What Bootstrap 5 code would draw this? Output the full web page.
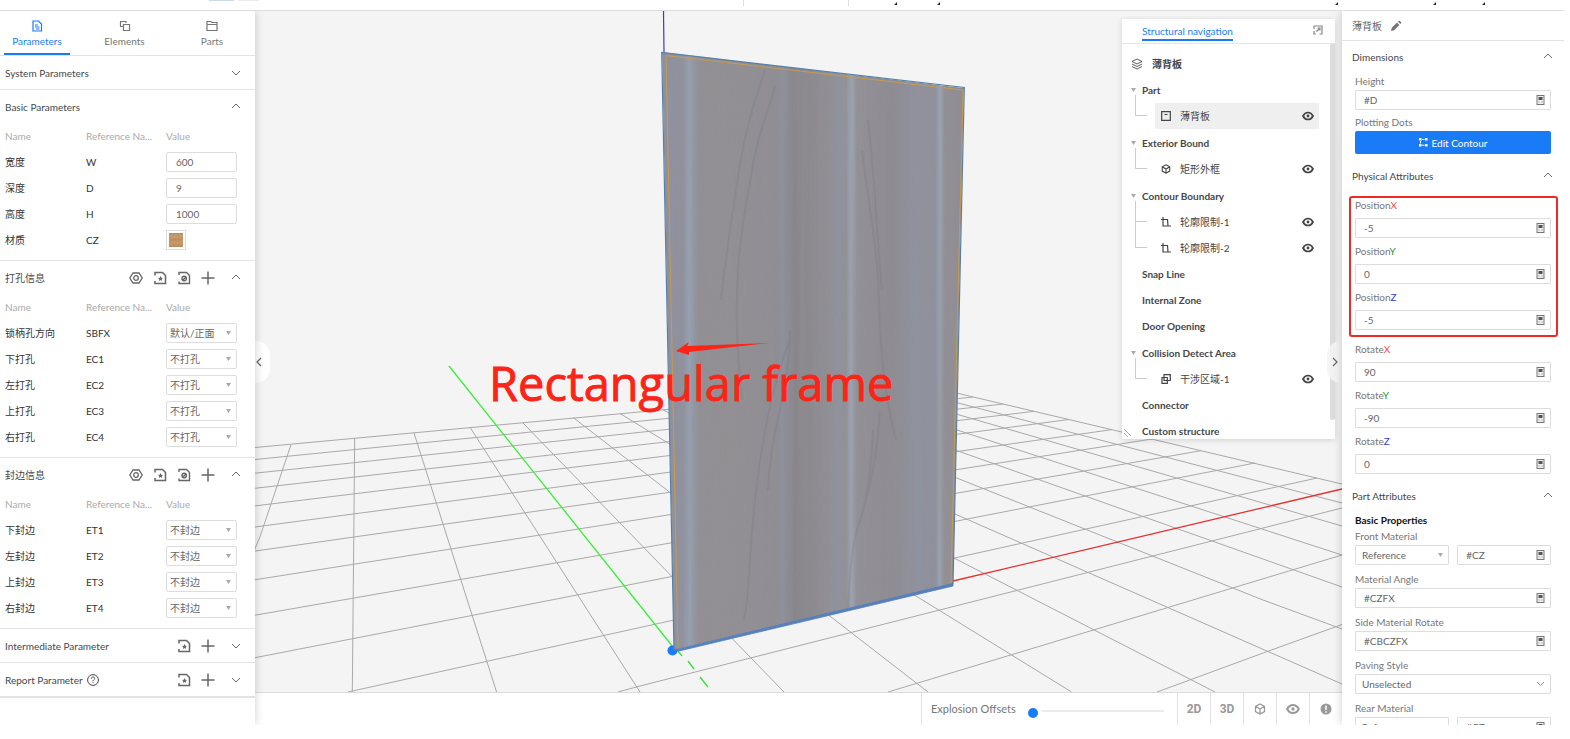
<!DOCTYPE html>
<html lang="en">
<head>
<meta charset="utf-8">
<meta name="viewport" content="width=device-width, initial-scale=1">
<title>Part editor</title>
<link rel="stylesheet" href="https://cdn.jsdelivr.net/npm/bootstrap@5.3.0/dist/css/bootstrap.min.css">
<style>
:root{--blue:#1a7bf7;--line:#e3e3e3;--ink:#45474b;--soft:#777;--faint:#aaa}
body{font-family:Lato,"Noto Sans CJK SC",sans-serif;font-size:10px;line-height:14px;color:var(--ink);background:#fff;height:100vh;padding:0 6px 14px 0;overflow:hidden}
svg{display:block;flex:none}
.line-icon{fill:none;stroke:currentColor;stroke-width:1.2}
.top-strip{height:11px;border-bottom:1px solid #dcdcdc}
.side-left{width:255px;box-shadow:1px 0 8px rgba(0,0,0,.16);z-index:3}
.side-right{width:222px;box-shadow:-1px 0 8px rgba(0,0,0,.16);z-index:4;overflow:hidden}
.icon-btn{border:0;background:none;padding:0;color:#666;display:block}
.tab-row{height:45px;border-bottom:1px solid var(--line);padding-left:4px;padding-right:10px}
.tab-row .nav-link{width:66px;height:44px;padding:9px 0 0;color:#777;border-bottom:2px solid transparent;line-height:14px}
.tab-row .nav-link.active{color:var(--blue);border-color:var(--blue)}
.tab-row .nav-link svg{margin:0 auto 2px}
.section{border-bottom:1px solid var(--line)}
.section.last{border-width:2px}
.section-head{height:33px;padding:0 14px 0 5px}
.section-head h2,.prop-head h2{font-size:10px;line-height:14px;font-weight:400;margin:0}
.tools{gap:8px;margin-right:15px}
.param-table{width:100%;table-layout:fixed;margin-bottom:7px;border-collapse:collapse}
.param-table td,.param-table th{height:26px;padding:0 0 0 5px;font-weight:400;vertical-align:middle;white-space:nowrap}
.param-table th{color:var(--faint)}
.param-table td{color:#333}
.box{display:block;height:20px;width:100%;border:1px solid #ddd;border-radius:1px;background:#fff;color:#666;font-size:10px;line-height:14px;padding:0 8px;box-shadow:none}
.box.value-box{width:71px;border-radius:2px;padding:0 9px}
select.box.value-box{padding:0 3px}
select.box{appearance:none;background:#fff url("data:image/svg+xml,%3Csvg xmlns='http://www.w3.org/2000/svg' width='5' height='4'%3E%3Cpath d='M0 0h5L2.500 4z' fill='%23aaa'/%3E%3C/svg%3E") no-repeat right 5px center}
select.box.wide{background:#fff url("data:image/svg+xml,%3Csvg xmlns='http://www.w3.org/2000/svg' width='9' height='6'%3E%3Cpath d='M1 1l3.5 3.500L8 1' fill='none' stroke='%23888'/%3E%3C/svg%3E") no-repeat right 5px center}
.swatch{width:20px;height:20px;border:1px solid #ddd;padding:2px;background:#fff;display:block}
.swatch span{display:block;height:14px;background:linear-gradient(#bd9062,#c99c6d 30%,#bd8f60 45%,#c89a6a 70%,#ba8c5e)}
.handle{position:absolute;top:330px;width:15px;height:42px;border:0;padding:0;background:rgba(255,255,255,.9);color:#666;z-index:2}
.handle.to-left{left:0;border-radius:0 14px 14px 0}
.handle.to-right{right:0;border-radius:14px 0 0 14px;background:rgba(244,244,244,.9)}
.stage{background:#f4f4f4;overflow:hidden}
.scene{position:absolute;inset:0;width:100%;height:100%}
.caption-text{font-family:"Open Sans","Noto Sans",sans-serif;font-size:47px;fill:#fc2317;stroke:#fc2317;stroke-width:.9}
.nav-panel{position:absolute;top:8px;right:7px;width:213px;height:420px;background:#fff;box-shadow:0 1px 6px rgba(0,0,0,.14);overflow:hidden}
.nav-title{height:25px;border-bottom:1px solid #e5e5e5;padding:0 12px 2px 20px}
.nav-title a{color:var(--blue);text-decoration:none;height:22px;padding-top:5px;border-bottom:2px solid var(--blue)}
.tree{padding:8px 16px 0 9px;color:#333}
.tree ul{list-style:none;margin:0;padding:0}
.root-row{height:24px;gap:9px}
.group-row{height:26px;font-weight:700;padding-left:11px;color:#45474b}
.group-row.open{height:27px;padding-left:0;gap:6px}
.item-row{height:26px;margin-left:24px;padding:0 5px 0 6px;gap:9px;color:#444;position:relative}
.item-row.active{background:#efefef}
.item-row::before{content:"";position:absolute;left:-20px;top:-8px;width:12px;height:21px;border:solid #ccc;border-width:0 0 1px 1px}
.item-row+.item-row::before{top:-14px;height:27px}
.scroll-thumb{position:absolute;right:0;top:25px;width:5px;height:376px;background:#dcdcdc;border-radius:0 0 3px 3px}
.grip{position:absolute;left:2px;bottom:2px}
.bottom-bar{height:33px;border-top:1px solid #dcdcdc;background:#fff}
.bottom-bar>*{border-left:1px solid var(--line)}
.explode{width:256px;padding:0 9px;gap:12px;font-size:11px;color:#777}
.view-btn{width:33px;border-width:0 0 0 1px;background:#fff;padding:0;color:#999;font:700 12px/14px Roboto,sans-serif}
.slider{appearance:none;background:none;width:136px;height:20px;margin:4px 0 0}
.slider::-webkit-slider-runnable-track{height:2px;background:linear-gradient(90deg,transparent 14px,#ebebeb 14px)}
.slider::-webkit-slider-thumb{appearance:none;width:10px;height:10px;border-radius:50%;background:var(--blue);margin-top:-2px}
.slider::-moz-range-thumb{width:10px;height:10px;border:0;border-radius:50%;background:var(--blue)}
.part-title{height:30px;border-bottom:1px solid var(--line);padding-left:10px;gap:9px}
.prop-head{height:32px;padding:0 11px 0 10px}
.fields{padding:0 13px}
.fields label{display:block;height:17px;line-height:17px;color:var(--soft)}
.fields.tall label{height:26px;line-height:26px}
.calc{position:relative}
.calc svg{position:absolute;right:6px;top:5px}
.edit-btn{height:23px;border-radius:2px;background:var(--blue);color:#fff;font-size:10px;line-height:14px;padding:0;border:0}
.gap-a{margin-top:6px}
.outlined{margin:0 6px 0 7px;position:relative}
.outlined::after{content:"";position:absolute;inset:4px 0 -7px 0;border:2px solid #ee2b22;border-radius:3px;pointer-events:none}
.outlined .fields{padding:0 7px 0 6px}
.ax-x{color:#f04848}.ax-y{color:#2a962a}.ax-z{color:#3a3ae0}
h3{font-size:10px;line-height:16px;font-weight:700;margin:0;color:#111}
</style>
<script src="https://cdn.jsdelivr.net/npm/bootstrap@5.3.0/dist/js/bootstrap.bundle.min.js"></script>
</head>
<body class="d-flex flex-column">
<svg class="d-none" aria-hidden="true">
<symbol id="i-down" viewBox="0 0 10 10"><path d="M1 3l4 4 4-4" fill="none" stroke="currentColor"/></symbol>
<symbol id="i-up" viewBox="0 0 10 10"><path d="M1 6l4-4 4 4" fill="none" stroke="currentColor"/></symbol>
<symbol id="i-hex" viewBox="0 0 16 16"><g fill="none" stroke="currentColor" stroke-width="1.3"><path d="M5 3h6l3.200 5L11 13H5L1.800 8z"/><circle cx="8" cy="8" r="2.300"/></g></symbol>
<symbol id="i-star" viewBox="0 0 16 16"><path d="M3 5.500V2.500H10.500L13.500 5.500V13.500H3V11" fill="none" stroke="currentColor" stroke-width="1.500"/><path d="M8.500 6l.8 1.700 1.800.2-1.300 1.200.3 1.900-1.600-1-1.600 1 .3-1.900L6 7.900l1.800-.2z" fill="currentColor"/></symbol>
<symbol id="i-slash" viewBox="0 0 16 16"><g fill="none" stroke="currentColor" stroke-width="1.400"><path d="M3 5V2.500h7.500L13.500 5.500v8H3V11.500"/><circle cx="8.200" cy="8.500" r="2.200"/><path d="M7 10l3-3"/></g></symbol>
<symbol id="i-plus" viewBox="0 0 16 16"><path d="M8 1.500v13M1.500 8h13" stroke="currentColor" stroke-width="1.500"/></symbol>
<symbol id="i-calc" viewBox="0 0 9 10"><rect x="1" y=".5" width="7" height="9" fill="#eee" stroke="#777"/><path d="M2.500 2h4v3h-4z" fill="#555"/><path d="M2.500 7h1M5.500 7h1" stroke="#888"/></symbol>
<symbol id="i-eye" viewBox="0 0 12 10"><path d="M1 5c1.300-2.500 3-3.500 5-3.500S9.700 2.500 11 5c-1.300 2.500-3 3.500-5 3.500S2.300 7.500 1 5z" fill="none" stroke="currentColor" stroke-width="1.700"/><circle cx="6" cy="5" r="1.400" fill="currentColor"/></symbol>
<symbol id="i-cube" viewBox="0 0 12 12"><path d="M6 1l4.500 2.300v5.200L6 11 1.500 8.500V3.300zM1.500 3.300L6 6l4.500-2.700M6 6v5" fill="none" stroke="currentColor" stroke-width="1.300"/></symbol>
<symbol id="i-contour" viewBox="0 0 10 10"><path d="M2 0v9h8M0 2.500h6.500L7 9" fill="none" stroke="currentColor" stroke-width="1.200"/></symbol>
</svg>

<header class="top-strip flex-shrink-0">
<svg width="100%" height="10" viewBox="0 0 1564 10" preserveAspectRatio="none" aria-hidden="true"><path d="M209 0h25v1h-25z" fill="#cbd9e6"/><path d="M238 0h21v1h-21z" fill="#ececec"/><path d="M743.500 0v6M848.500 0v6" stroke="#ddd"/><path d="M897 2v3h-3zM940 2v3h-3zM1338 2v3h-3zM1436 2v3h-3zM1485 2v3h-3z" fill="#222"/></svg>
</header>

<div class="d-flex flex-grow-1 overflow-hidden">
<aside class="side-left bg-white flex-shrink-0 position-relative">
<nav class="nav tab-row justify-content-between text-center">
<a class="nav-link active" href="#"><svg class="line-icon" width="12" height="12" viewBox="0 0 12 12"><path d="M2 1h5.500L10.500 4v7H2zM4 5h3M4 7h4.500M5 9h3.500"/></svg>Parameters</a>
<a class="nav-link" href="#"><svg class="line-icon" width="12" height="12" viewBox="0 0 12 12"><path d="M4 6.500H1.500V1.500h5.500V3M4.500 4.500h6V10.500h-6z"/></svg>Elements</a>
<a class="nav-link" href="#"><svg class="line-icon" width="12" height="12" viewBox="0 0 12 12"><path d="M1 1.500h4l1 1h5v8H1zM1 4.500h10"/></svg>Parts</a>
</nav>

<section class="section"><div class="section-head d-flex align-items-center justify-content-between"><h2>System Parameters</h2><button class="icon-btn" aria-label="Expand"><svg width="10" height="10"><use href="#i-down"/></svg></button></div></section>

<section class="section"><div class="section-head d-flex align-items-center justify-content-between"><h2>Basic Parameters</h2><button class="icon-btn" aria-label="Collapse"><svg width="10" height="10"><use href="#i-up"/></svg></button></div>
<table class="param-table"><colgroup><col style="width:81px"><col style="width:80px"><col></colgroup>
<thead><tr><th>Name</th><th>Reference Na...</th><th>Value</th></tr></thead>
<tbody>
<tr><td>宽度</td><td>W</td><td><input class="box value-box" aria-label="宽度" value="600"></td></tr>
<tr><td>深度</td><td>D</td><td><input class="box value-box" aria-label="深度" value="9"></td></tr>
<tr><td>高度</td><td>H</td><td><input class="box value-box" aria-label="高度" value="1000"></td></tr>
<tr><td>材质</td><td>CZ</td><td><button class="swatch" aria-label="材质"><span></span></button></td></tr>
</tbody></table></section>

<section class="section"><div class="section-head d-flex align-items-center"><h2 class="me-auto">打孔信息</h2>
<div class="tools d-flex"><button class="icon-btn" aria-label="Hole"><svg width="16" height="16"><use href="#i-hex"/></svg></button><button class="icon-btn" aria-label="Template"><svg width="16" height="16"><use href="#i-star"/></svg></button><button class="icon-btn" aria-label="Clear"><svg width="16" height="16"><use href="#i-slash"/></svg></button><button class="icon-btn" aria-label="Add"><svg width="16" height="16"><use href="#i-plus"/></svg></button></div>
<button class="icon-btn" aria-label="Collapse"><svg width="10" height="10"><use href="#i-up"/></svg></button></div>
<table class="param-table"><colgroup><col style="width:81px"><col style="width:80px"><col></colgroup>
<thead><tr><th>Name</th><th>Reference Na...</th><th>Value</th></tr></thead>
<tbody>
<tr><td>锁柄孔方向</td><td>SBFX</td><td><select class="box value-box" aria-label="锁柄孔方向"><option>默认/正面</option></select></td></tr>
<tr><td>下打孔</td><td>EC1</td><td><select class="box value-box" aria-label="下打孔"><option>不打孔</option></select></td></tr>
<tr><td>左打孔</td><td>EC2</td><td><select class="box value-box" aria-label="左打孔"><option>不打孔</option></select></td></tr>
<tr><td>上打孔</td><td>EC3</td><td><select class="box value-box" aria-label="上打孔"><option>不打孔</option></select></td></tr>
<tr><td>右打孔</td><td>EC4</td><td><select class="box value-box" aria-label="右打孔"><option>不打孔</option></select></td></tr>
</tbody></table></section>

<section class="section"><div class="section-head d-flex align-items-center"><h2 class="me-auto">封边信息</h2>
<div class="tools d-flex"><button class="icon-btn" aria-label="Edge"><svg width="16" height="16"><use href="#i-hex"/></svg></button><button class="icon-btn" aria-label="Template"><svg width="16" height="16"><use href="#i-star"/></svg></button><button class="icon-btn" aria-label="Clear"><svg width="16" height="16"><use href="#i-slash"/></svg></button><button class="icon-btn" aria-label="Add"><svg width="16" height="16"><use href="#i-plus"/></svg></button></div>
<button class="icon-btn" aria-label="Collapse"><svg width="10" height="10"><use href="#i-up"/></svg></button></div>
<table class="param-table"><colgroup><col style="width:81px"><col style="width:80px"><col></colgroup>
<thead><tr><th>Name</th><th>Reference Na...</th><th>Value</th></tr></thead>
<tbody>
<tr><td>下封边</td><td>ET1</td><td><select class="box value-box" aria-label="下封边"><option>不封边</option></select></td></tr>
<tr><td>左封边</td><td>ET2</td><td><select class="box value-box" aria-label="左封边"><option>不封边</option></select></td></tr>
<tr><td>上封边</td><td>ET3</td><td><select class="box value-box" aria-label="上封边"><option>不封边</option></select></td></tr>
<tr><td>右封边</td><td>ET4</td><td><select class="box value-box" aria-label="右封边"><option>不封边</option></select></td></tr>
</tbody></table></section>

<section class="section"><div class="section-head d-flex align-items-center"><h2 class="me-auto">Intermediate Parameter</h2>
<div class="tools d-flex"><button class="icon-btn" aria-label="Template"><svg width="16" height="16"><use href="#i-star"/></svg></button><button class="icon-btn" aria-label="Add"><svg width="16" height="16"><use href="#i-plus"/></svg></button></div>
<button class="icon-btn" aria-label="Expand"><svg width="10" height="10"><use href="#i-down"/></svg></button></div></section>

<section class="section last"><div class="section-head d-flex align-items-center"><h2>Report Parameter</h2><svg class="line-icon ms-1 me-auto" style="stroke-width:1" width="12" height="12" viewBox="0 0 12 12"><circle cx="6" cy="6" r="5.400"/><path d="M4.300 4.700c0-2.300 3.400-2.200 3.400-.2C7.700 5.700 6 5.700 6 7.200M6 8.200v1"/></svg>
<div class="tools d-flex"><button class="icon-btn" aria-label="Template"><svg width="16" height="16"><use href="#i-star"/></svg></button><button class="icon-btn" aria-label="Add"><svg width="16" height="16"><use href="#i-plus"/></svg></button></div>
<button class="icon-btn" aria-label="Expand"><svg width="10" height="10"><use href="#i-down"/></svg></button></div></section>
</aside>

<main class="d-flex flex-column flex-grow-1 position-relative">
<div class="stage flex-grow-1 position-relative">
<svg class="scene" viewBox="255 11 1087 681" preserveAspectRatio="xMidYMid slice" role="img" aria-label="3D view of the board">
<defs>
<linearGradient id="wood" x1="0" x2="1" y1="0" y2="0">
<stop offset="0" stop-color="#8e909c"/><stop offset=".07" stop-color="#9092a0"/><stop offset=".09" stop-color="#98a3b5"/><stop offset=".105" stop-color="#929aa9"/><stop offset=".12" stop-color="#929095"/><stop offset=".25" stop-color="#929094"/><stop offset=".38" stop-color="#8f8e94"/><stop offset=".4" stop-color="#8e909b"/><stop offset=".44" stop-color="#88868b"/><stop offset=".55" stop-color="#908f94"/><stop offset=".58" stop-color="#8f939f"/><stop offset=".61" stop-color="#919298"/><stop offset=".627" stop-color="#9da7b7"/><stop offset=".645" stop-color="#929197"/><stop offset=".76" stop-color="#8e8c92"/><stop offset=".84" stop-color="#8f929f"/><stop offset=".905" stop-color="#8e919d"/><stop offset=".92" stop-color="#9ca5b5"/><stop offset=".935" stop-color="#929096"/><stop offset="1" stop-color="#8f8d93"/>
</linearGradient>
<filter id="grain" x="0" y="0" width="1" height="1"><feTurbulence type="fractalNoise" baseFrequency=".16 .003" numOctaves="4" seed="7"/><feColorMatrix values="0 0 0 0 .3  0 0 0 0 .28  0 0 0 0 .3  2.400 0 0 0 -.9"/></filter>
<clipPath id="board"><path d="M662 52L964 88L953 585L674 650z"/></clipPath>
</defs>
<g fill="none" stroke="#a9a9a9">
<path d="M291 444.700L260 536.700L254 551M354.700 438.300L352.300 692M414 433L496.600 692M470 427.300L640 692M522.700 422.700L784 692M573.400 417.700L928 692M619.800 413.300L1071.600 692M663 409.800L954.500 558.300L1215 692M955 514L1342 684M956 477.700L1263 600L1342 629M956 450.300L1342 587M957 430L1342 555M957 414.300L1342 526M957 402.700L1342 503M957.700 393.300L1342 484"/>
<path d="M254 447.600L700 406.400M254 459.600L700 415.200M254 473.300L973 397M254 488.400L1003 404M254 506L1034 411.300M254 527.100L1069 419.500M254 551.200L1112 429.600M254 579.900L1152 439M254 615.400L1201 450.700M254 657.900L1255 463M348 692L1317 478M618 692L640 686L1342 508M888 692L1342 555M1157 692L1266.700 651.700L1342 624.500"/>
</g>
<path d="M953 581L1342 489" stroke="#e63232" stroke-width="1.300"/>
<path d="M449 366L673 647" stroke="#36f036" stroke-width="1.300"/><path d="M677 650l5 6M688 661l6 8M700 677l8 10" stroke="#36e036" stroke-width="1.300"/>
<path d="M663.500 11L664 53" stroke="#4537cf" stroke-width="1.200"/>
<circle cx="672.500" cy="650.500" r="5" fill="#1a7bf7"/>
<g clip-path="url(#board)">
<path d="M662 52L964 88L953 585L674 650z" fill="url(#wood)"/>
<rect x="660" y="50" width="306" height="604" filter="url(#grain)" opacity=".42"/>
<g fill="none" stroke="#646169" stroke-width="2" opacity=".14"><path d="M775 86c-6 24-18 50-23 84s-12 60-14 100-2 70 4 130M765 70c-10 30-20 60-26 100s-14 90-18 130M862 150c6 50 14 90 16 130s2 100 18 160M868 120c8 70 10 140 14 170M790 340c-20 50-30 110-36 170s-4 80-10 110M880 410c-2 40-10 80-20 110s-10 60-12 90M873 430c-2 40-6 70-14 95M790 330c0 60-20 100-22 160"/></g>
</g>
<path d="M674 650L953 583.500V586L679 651z" fill="#5f7fb0" stroke="#4a7fc8" stroke-width=".8"/>
<path d="M674 650L661.700 52.500L964.300 87.500L953 584" fill="none" stroke="#5580ad" stroke-width="1.200"/>
<path d="M678 648L666 55.500L963 90L951 583" fill="none" stroke="#c99a4d"/>
<path d="M676 351l13-9-2 4 82-3-80 9 0 3z" fill="#fc2317"/>
<text class="caption-text" x="489" y="401">Rectangular frame</text>
</svg>

<section class="nav-panel">
<div class="nav-title d-flex justify-content-between align-items-center"><a href="#">Structural navigation</a><button class="icon-btn" aria-label="Detach"><svg class="line-icon" style="color:#888" width="10" height="10" viewBox="0 0 10 10"><path d="M1 4V1h8v8H6.500M1 6v3h2M3.500 6.500L7 3M4.500 3H7v2.500"/></svg></button></div>
<div class="tree">
<div class="root-row d-flex align-items-center"><svg class="line-icon" style="stroke-width:.8" width="12" height="12" viewBox="0 0 12 12"><path d="M6 1l5 2.500L6 6 1 3.500zM1 6l5 2.500L11 6M1 8.500L6 11l5-2.500"/></svg><span class="fw-bold" style="color:#444">薄背板</span></div>
<ul>
<li class="group-row open d-flex align-items-center"><svg width="5" height="4" style="color:#aaa"><path d="M0 0h5L2.500 4z" fill="currentColor"/></svg>Part</li>
<li class="item-row active d-flex align-items-center"><svg class="line-icon" width="10" height="10" viewBox="0 0 10 10"><path d="M.7.700h8.600v8.600H.7zM3.500 3.500h3"/></svg><span class="me-auto">薄背板</span><svg width="12" height="10"><use href="#i-eye"/></svg></li>
<li class="group-row open d-flex align-items-center"><svg width="5" height="4" style="color:#aaa"><path d="M0 0h5L2.500 4z" fill="currentColor"/></svg>Exterior Bound</li>
<li class="item-row d-flex align-items-center"><svg width="10" height="10"><use href="#i-cube"/></svg><span class="me-auto">矩形外框</span><svg width="12" height="10"><use href="#i-eye"/></svg></li>
<li class="group-row open d-flex align-items-center"><svg width="5" height="4" style="color:#aaa"><path d="M0 0h5L2.500 4z" fill="currentColor"/></svg>Contour Boundary</li>
<li class="item-row d-flex align-items-center"><svg width="10" height="10"><use href="#i-contour"/></svg><span class="me-auto">轮廓限制-1</span><svg width="12" height="10"><use href="#i-eye"/></svg></li>
<li class="item-row d-flex align-items-center"><svg width="10" height="10"><use href="#i-contour"/></svg><span class="me-auto">轮廓限制-2</span><svg width="12" height="10"><use href="#i-eye"/></svg></li>
<li class="group-row d-flex align-items-center">Snap Line</li>
<li class="group-row d-flex align-items-center">Internal Zone</li>
<li class="group-row d-flex align-items-center">Door Opening</li>
<li class="group-row open d-flex align-items-center"><svg width="5" height="4" style="color:#aaa"><path d="M0 0h5L2.500 4z" fill="currentColor"/></svg>Collision Detect Area</li>
<li class="item-row d-flex align-items-center"><svg class="line-icon" width="10" height="10" viewBox="0 0 10 10"><path d="M3 .700h6.300v5.800H3zM1 3.500h5.300v5.800H1z"/></svg><span class="me-auto">干涉区域-1</span><svg width="12" height="10"><use href="#i-eye"/></svg></li>
<li class="group-row d-flex align-items-center">Connector</li>
<li class="group-row d-flex align-items-center">Custom structure</li>
</ul>
</div>
<div class="scroll-thumb"></div>
<svg class="grip" width="8" height="8" viewBox="0 0 8 8"><path d="M0 0l7 7M0 4l4 4" stroke="#aaa"/></svg>
</section>
<button class="handle to-left" aria-label="Hide left panel"><svg class="line-icon" width="8" height="12" viewBox="0 0 8 12"><path d="M6 2L2 6l4 4"/></svg></button>
<button class="handle to-right" aria-label="Hide right panel"><svg class="line-icon mx-auto" width="8" height="12" viewBox="0 0 8 12"><path d="M2 2l4 4-4 4"/></svg></button>
</div>
<div class="bottom-bar d-flex justify-content-end flex-shrink-0">
<div class="explode d-flex align-items-center"><label for="explode">Explosion Offsets</label><input class="slider" id="explode" type="range" value="0"></div>
<button class="view-btn">2D</button>
<button class="view-btn">3D</button>
<button class="view-btn" aria-label="Box view"><svg class="mx-auto" width="12" height="12"><use href="#i-cube"/></svg></button>
<button class="view-btn" aria-label="Visibility"><svg class="mx-auto" width="14" height="12"><use href="#i-eye"/></svg></button>
<button class="view-btn" aria-label="Information"><svg class="mx-auto" width="12" height="12" viewBox="0 0 12 12"><circle cx="6" cy="6" r="5.500" fill="currentColor"/><path d="M6 2.500v4.500M6 8.200v1.500" stroke="#fff" stroke-width="1.500"/></svg></button>
</div>
</main>

<aside class="side-right bg-white flex-shrink-0 position-relative">
<div class="part-title d-flex align-items-center"><span style="color:#666">薄背板</span><svg width="11" height="11" viewBox="0 0 11 11"><path d="M0 11l.8-3.200L6 2.600l2.400 2.400-5.200 5.200zM7 1.700L8.300.400l2.300 2.300L9.300 4z" fill="#777"/></svg></div>
<div class="prop-head d-flex align-items-center justify-content-between"><h2>Dimensions</h2><button class="icon-btn" aria-label="Collapse"><svg width="10" height="10"><use href="#i-up"/></svg></button></div>
<div class="fields">
<label for="height">Height</label><div class="calc"><input class="box" id="height" value="#D"><svg width="9" height="10"><use href="#i-calc"/></svg></div>
<label class="mt-1" for="dots">Plotting Dots</label>
<button class="btn edit-btn w-100 d-flex align-items-center justify-content-center gap-1" id="dots"><svg width="9" height="9" viewBox="0 0 9 9"><path d="M0 0h2.500v2.500H0zM6 0h2.500v2.500H6zM0 6h2.500v2.500H0zM6 6h2.500v2.500H6zM3 1h2.500v1H3zM1 3h1v2.500H1zM3 6.800h2.500v1H3z" fill="#fff"/></svg>Edit Contour</button>
</div>
<div class="prop-head d-flex align-items-center justify-content-between gap-a"><h2>Physical Attributes</h2><button class="icon-btn" aria-label="Collapse"><svg width="10" height="10"><use href="#i-up"/></svg></button></div>
<div class="outlined"><div class="fields tall">
<label for="px">Position<span class="ax-x">X</span></label><div class="calc"><input class="box" id="px" value="-5"><svg width="9" height="10"><use href="#i-calc"/></svg></div>
<label for="py">Position<span class="ax-y">Y</span></label><div class="calc"><input class="box" id="py" value="0"><svg width="9" height="10"><use href="#i-calc"/></svg></div>
<label for="pz">Position<span class="ax-z">Z</span></label><div class="calc"><input class="box" id="pz" value="-5"><svg width="9" height="10"><use href="#i-calc"/></svg></div>
</div></div>
<div class="fields tall gap-a">
<label for="rx">Rotate<span class="ax-x">X</span></label><div class="calc"><input class="box" id="rx" value="90"><svg width="9" height="10"><use href="#i-calc"/></svg></div>
<label for="ry">Rotate<span class="ax-y">Y</span></label><div class="calc"><input class="box" id="ry" value="-90"><svg width="9" height="10"><use href="#i-calc"/></svg></div>
<label for="rz">Rotate<span class="ax-z">Z</span></label><div class="calc"><input class="box" id="rz" value="0"><svg width="9" height="10"><use href="#i-calc"/></svg></div>
</div>
<div class="prop-head d-flex align-items-center justify-content-between gap-a"><h2>Part Attributes</h2><button class="icon-btn" aria-label="Collapse"><svg width="10" height="10"><use href="#i-up"/></svg></button></div>
<div class="fields">
<h3>Basic Properties</h3>
<label for="fm">Front Material</label>
<div class="d-flex gap-2"><select class="box w-50" id="fm" style="padding:0 6px"><option>Reference</option></select><div class="calc w-50"><input class="box" aria-label="Front material value" value="#CZ"><svg width="9" height="10"><use href="#i-calc"/></svg></div></div>
<label class="gap-a" for="ma">Material Angle</label><div class="calc"><input class="box" id="ma" value="#CZFX"><svg width="9" height="10"><use href="#i-calc"/></svg></div>
<label class="gap-a" for="sr">Side Material Rotate</label><div class="calc"><input class="box" id="sr" value="#CBCZFX"><svg width="9" height="10"><use href="#i-calc"/></svg></div>
<label class="gap-a" for="ps">Paving Style</label><select class="box wide" id="ps" style="padding:0 6px"><option>Unselected</option></select>
<label class="gap-a" for="rm">Rear Material</label>
<div class="d-flex gap-2"><select class="box w-50" id="rm" style="padding:0 6px"><option>Reference</option></select><div class="calc w-50"><input class="box" aria-label="Rear material value" value="#CZ"><svg width="9" height="10"><use href="#i-calc"/></svg></div></div>
</div>
</aside>
</div>
</body>
</html>
